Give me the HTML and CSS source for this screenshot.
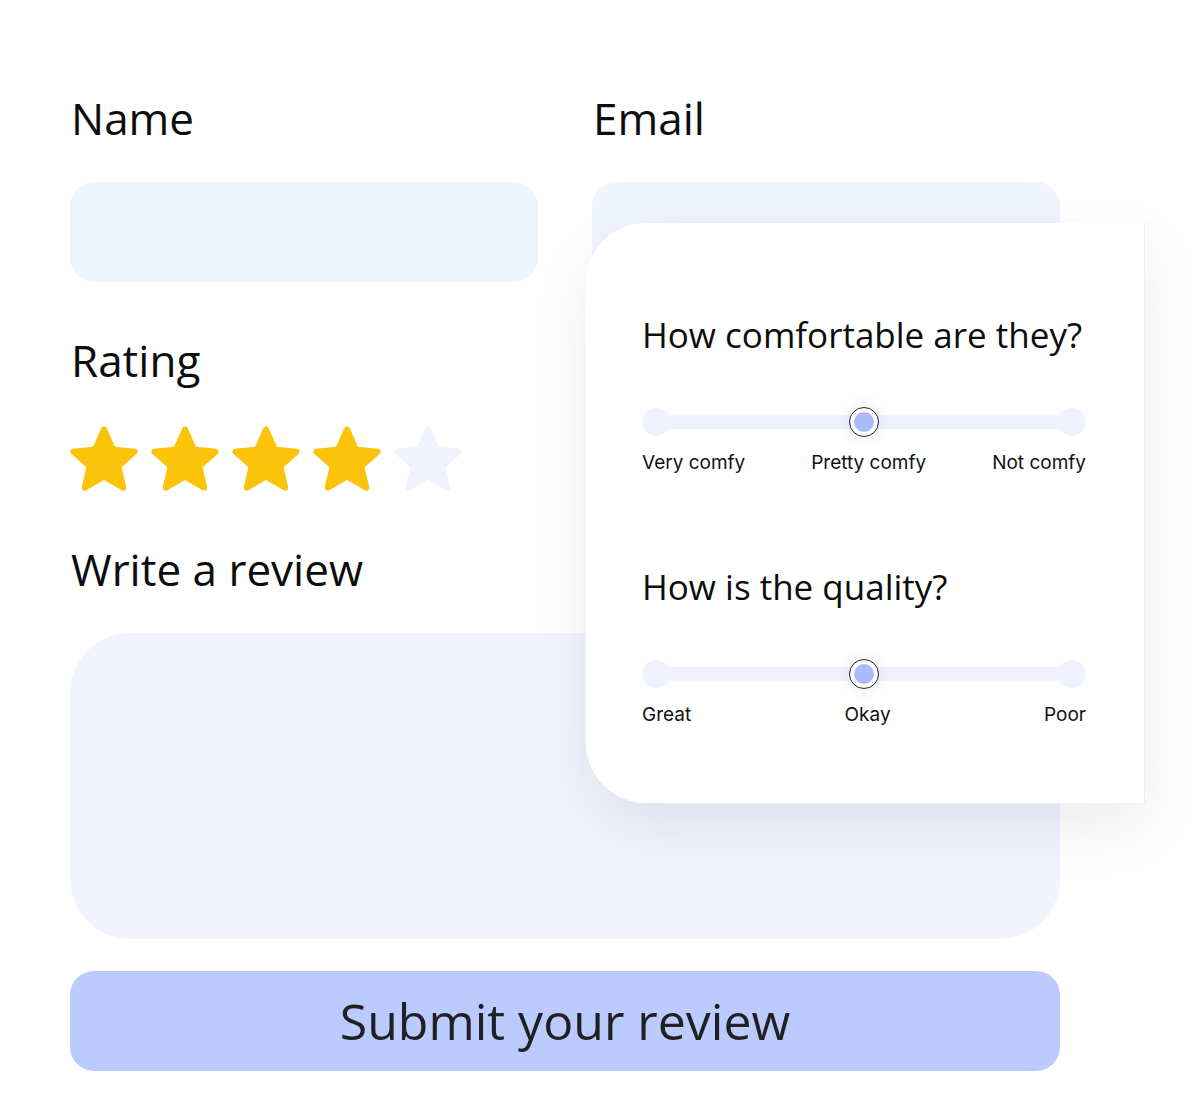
FILE: index.html
```html
<!DOCTYPE html>
<html>
<head>
<meta charset="utf-8">
<link rel="stylesheet" href="styles.css">
</head>
<body>
<div class="page">
  <form class="form">
    <div class="row">
      <div class="field">
        <label class="label">Name</label>
        <div class="input"></div>
      </div>
      <div class="field">
        <label class="label">Email</label>
        <div class="input"></div>
      </div>
    </div>
    <div class="rating">
      <div class="label">Rating</div>
      <div class="stars">
        <svg class="star on" viewBox="0.8 1.5 22.4 21.6"><path d="M12 1.6c.4 0 .7.2.9.6l2.7 6.1 6.6.6c.9.1 1.2 1.1.6 1.7l-5 4.4 1.5 6.5c.2.9-.7 1.5-1.5 1.1L12 19.2l-5.8 3.4c-.8.4-1.7-.2-1.5-1.1l1.5-6.5-5-4.4c-.6-.6-.3-1.6.6-1.7l6.6-.6 2.7-6.1c.2-.4.5-.6.9-.6z"/></svg>
        <svg class="star on" viewBox="0.8 1.5 22.4 21.6"><path d="M12 1.6c.4 0 .7.2.9.6l2.7 6.1 6.6.6c.9.1 1.2 1.1.6 1.7l-5 4.4 1.5 6.5c.2.9-.7 1.5-1.5 1.1L12 19.2l-5.8 3.4c-.8.4-1.7-.2-1.5-1.1l1.5-6.5-5-4.4c-.6-.6-.3-1.6.6-1.7l6.6-.6 2.7-6.1c.2-.4.5-.6.9-.6z"/></svg>
        <svg class="star on" viewBox="0.8 1.5 22.4 21.6"><path d="M12 1.6c.4 0 .7.2.9.6l2.7 6.1 6.6.6c.9.1 1.2 1.1.6 1.7l-5 4.4 1.5 6.5c.2.9-.7 1.5-1.5 1.1L12 19.2l-5.8 3.4c-.8.4-1.7-.2-1.5-1.1l1.5-6.5-5-4.4c-.6-.6-.3-1.6.6-1.7l6.6-.6 2.7-6.1c.2-.4.5-.6.9-.6z"/></svg>
        <svg class="star on" viewBox="0.8 1.5 22.4 21.6"><path d="M12 1.6c.4 0 .7.2.9.6l2.7 6.1 6.6.6c.9.1 1.2 1.1.6 1.7l-5 4.4 1.5 6.5c.2.9-.7 1.5-1.5 1.1L12 19.2l-5.8 3.4c-.8.4-1.7-.2-1.5-1.1l1.5-6.5-5-4.4c-.6-.6-.3-1.6.6-1.7l6.6-.6 2.7-6.1c.2-.4.5-.6.9-.6z"/></svg>
        <svg class="star off" viewBox="0.8 1.5 22.4 21.6"><path d="M12 1.6c.4 0 .7.2.9.6l2.7 6.1 6.6.6c.9.1 1.2 1.1.6 1.7l-5 4.4 1.5 6.5c.2.9-.7 1.5-1.5 1.1L12 19.2l-5.8 3.4c-.8.4-1.7-.2-1.5-1.1l1.5-6.5-5-4.4c-.6-.6-.3-1.6.6-1.7l6.6-.6 2.7-6.1c.2-.4.5-.6.9-.6z"/></svg>
      </div>
    </div>
    <div class="review">
      <div class="label">Write a review</div>
      <div class="textarea"></div>
    </div>
    <div class="button">Submit your review</div>
  </form>

  <div class="card">
    <div class="question">
      <div class="q-title">How comfortable are they?</div>
      <div class="slider">
        <div class="track">
          <span class="end"></span>
          <span class="thumb"><span class="dot"></span></span>
          <span class="end"></span>
        </div>
        <div class="ticks">
          <span>Very comfy</span>
          <span>Pretty comfy</span>
          <span>Not comfy</span>
        </div>
      </div>
    </div>
    <div class="question">
      <div class="q-title">How is the quality?</div>
      <div class="slider">
        <div class="track">
          <span class="end"></span>
          <span class="thumb"><span class="dot"></span></span>
          <span class="end"></span>
        </div>
        <div class="ticks">
          <span>Great</span>
          <span>Okay</span>
          <span>Poor</span>
        </div>
      </div>
    </div>
  </div>
</div>
</body>
</html>
```

FILE: styles.css
```css
* { box-sizing: border-box; }
html, body { margin: 0; padding: 0; background: #ffffff; }
body { width: 1200px; height: 1116px; overflow: hidden; }

.page {
  position: relative;
  width: 1200px;
  height: 1116px;
  font-family: "Open Sans", "Noto Sans", sans-serif;
  color: #111111;
}

.form {
  display: flex;
  flex-direction: column;
  padding: 88px 140px 0 70px;
}

.label {
  font-size: 44px;
  line-height: 60px;
  font-weight: 400;
  color: #0d0d0d;
  padding-left: 1px;
}

.row {
  display: grid;
  grid-template-columns: 468px 468px;
  column-gap: 54px;
}

.field { display: flex; flex-direction: column; gap: 34px; }

.input {
  height: 100px;
  background: #f0f4fe;
  border-radius: 24px;
}

.rating { margin-top: 48px; display: flex; flex-direction: column; gap: 36px; }

.stars { display: flex; gap: 13px; }
.star { width: 68px; height: 66px; display: block; }
.star.on { fill: #fdc20a; }
.star.off { fill: #f0f3fe; }

.review { margin-top: 47px; display: flex; flex-direction: column; gap: 34px; }

.textarea {
  height: 306px;
  background: #f1f4fe;
  border-radius: 60px;
}

.button {
  margin-top: 32px;
  height: 100px;
  background: #bccbfd;
  border-radius: 24px;
  display: flex;
  align-items: center;
  justify-content: center;
  font-size: 50px;
  color: #1f1f24;
}

.card {
  position: absolute;
  left: 586px;
  top: 223px;
  width: 559px;
  height: 580px;
  background: #ffffff;
  border-radius: 60px 0 0 60px;
  border-right: 1px solid #ececec;
  box-shadow: 0 24px 60px rgba(40, 40, 70, 0.09);
  padding: 88px 58px 0 56px;
  display: flex;
  flex-direction: column;
  gap: 88px;
}

.question { display: flex; flex-direction: column; gap: 48px; }

.q-title {
  font-size: 35px;
  line-height: 48px;
  color: #0d0d0d;
}

.slider { display: flex; flex-direction: column; gap: 14px; }

.track {
  height: 30px;
  display: flex;
  align-items: center;
  justify-content: space-between;
  position: relative;
}
.track::before {
  content: "";
  position: absolute;
  left: 14px;
  right: 14px;
  top: 8px;
  height: 14px;
  background: #f0f3fd;
}
.end {
  width: 28px;
  height: 28px;
  border-radius: 50%;
  background: #f0f3fd;
  position: relative;
}
.thumb {
  width: 30px;
  height: 30px;
  border-radius: 50%;
  background: #ffffff;
  border: 1.5px solid #222;
  box-shadow: 0 0 14px rgba(80, 90, 140, 0.15);
  display: flex;
  align-items: center;
  justify-content: center;
  position: relative;
}
.dot {
  width: 20px;
  height: 20px;
  border-radius: 50%;
  background: #a9bcfb;
}

.ticks {
  display: flex;
  justify-content: space-between;
  font-family: "Inter", sans-serif;
  font-size: 19px;
  line-height: 24px;
  color: #111111;
}
```
